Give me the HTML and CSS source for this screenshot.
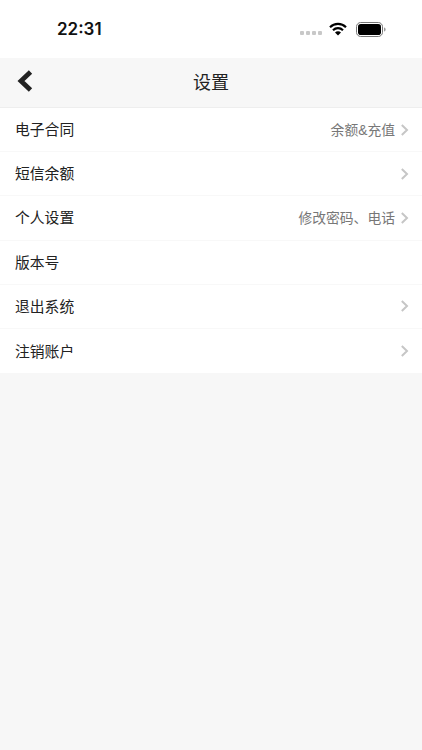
FILE: index.html
```html
<!DOCTYPE html>
<html lang="zh-CN">
<head>
<meta charset="utf-8">
<title>设置</title>
<link rel="stylesheet" href="styles.css">
</head>
<body>
<div class="status">
  <span class="time">22:31</span>
  <div class="status-icons">
    <div class="dots"><i></i><i></i><i></i><i></i></div>
    <svg class="wifi" width="18" height="14" viewBox="0 0 18 14"><path d="M1 5.2 A11.5 11.5 0 0 1 17 5.2" fill="none" stroke="#000" stroke-width="2.2"/><path d="M4 8.2 A7.2 7.2 0 0 1 14 8.2" fill="none" stroke="#000" stroke-width="2.2"/><path d="M6 10.6 A4.2 4.2 0 0 1 12 10.6 L9 13.6 Z" fill="#000"/></svg>
    <svg class="battery" width="30" height="15" viewBox="0 0 30 15"><rect x="0.5" y="0.5" width="26" height="14" rx="4.2" fill="none" stroke="#777"/><rect x="2" y="2" width="23" height="11" rx="2.8" fill="#000"/><path d="M28 5.5 C29.2 5.8 29.6 6.5 29.6 7.5 C29.6 8.5 29.2 9.2 28 9.5 Z" fill="#999"/></svg>
  </div>
</div>
<header class="nav">
  <svg class="back" width="18" height="24" viewBox="0 0 18 24"><path d="M14.5 3 L5 12 L14.5 21" fill="none" stroke="#222" stroke-width="4.8"/></svg>
  <h1 class="title">设置</h1>
</header>
<ul class="list">
  <li class="row"><span class="label">电子合同</span><span class="value">余额&amp;充值</span><svg class="chev" width="9" height="14" viewBox="0 0 9 14"><path d="M1.8 2 L7 7 L1.8 12" fill="none" stroke="#c6c6c6" stroke-width="2"/></svg></li>
  <li class="row"><span class="label">短信余额</span><svg class="chev" width="9" height="14" viewBox="0 0 9 14"><path d="M1.8 2 L7 7 L1.8 12" fill="none" stroke="#c6c6c6" stroke-width="2"/></svg></li>
  <li class="row"><span class="label">个人设置</span><span class="value">修改密码、电话</span><svg class="chev" width="9" height="14" viewBox="0 0 9 14"><path d="M1.8 2 L7 7 L1.8 12" fill="none" stroke="#c6c6c6" stroke-width="2"/></svg></li>
  <li class="row"><span class="label">版本号</span></li>
  <li class="row"><span class="label">退出系统</span><svg class="chev" width="9" height="14" viewBox="0 0 9 14"><path d="M1.8 2 L7 7 L1.8 12" fill="none" stroke="#c6c6c6" stroke-width="2"/></svg></li>
  <li class="row"><span class="label">注销账户</span><svg class="chev" width="9" height="14" viewBox="0 0 9 14"><path d="M1.8 2 L7 7 L1.8 12" fill="none" stroke="#c6c6c6" stroke-width="2"/></svg></li>
</ul>
</body>
</html>
```
FILE: styles.css
```css
* { box-sizing: border-box; }
html, body { margin: 0; padding: 0; }
body {
  width: 422px;
  height: 750px;
  overflow: hidden;
  background: #f7f7f7;
  font-family: "Liberation Sans", "Noto Sans CJK SC", sans-serif;
}
.status {
  height: 58px;
  background: #fff;
  display: flex;
  align-items: center;
  justify-content: space-between;
  padding: 0 36px 0 57px;
}
.time { font-family: Inter, "Liberation Sans", sans-serif; font-size: 17px; font-weight: 600; color: #111; }
.status-icons { display: flex; align-items: center; }
.dots { display: flex; gap: 2px; margin-right: 7px; margin-top: 8px; }
.dots i { width: 4px; height: 4px; border-radius: 1px; background: #c8c8c8; display: block; }
.wifi { margin-right: 9px; }
.nav {
  height: 50px;
  background: #f7f7f7;
  border-bottom: 1px solid #eeeeee;
  display: flex;
  align-items: center;
  justify-content: center;
  padding-bottom: 3px;
  position: relative;
}
.back { position: absolute; left: 16px; top: 11px; }
.title { margin: 0; font-size: 18px; font-weight: 400; color: #222; }
.list { list-style: none; margin: 0; padding: 0; background: #fff; }
.row {
  height: 44.2px;
  display: flex;
  align-items: center;
  padding: 0 13px 0 15px;
  border-bottom: 1px solid #f8f8f8;
  font-size: 14.8px;
}
.row:last-child { border-bottom: 0; }
.label { color: #222; padding-bottom: 2px; }
.value { margin-left: auto; color: #777; font-size: 13.8px; margin-right: 5px; padding-bottom: 2px; }
.chev { flex: none; }
.label + .chev { margin-left: auto; }
```
